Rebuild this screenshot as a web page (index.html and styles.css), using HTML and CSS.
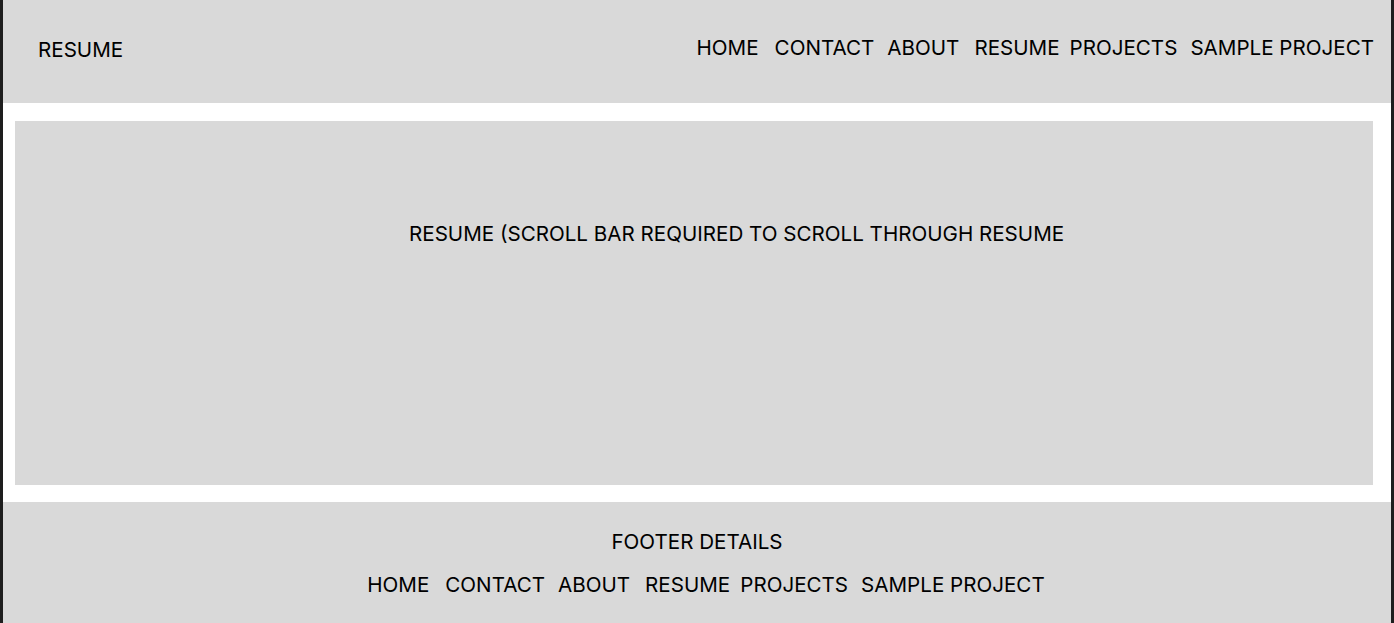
FILE: index.html
```html
<!DOCTYPE html>
<html lang="en">
<head>
    <meta charset="UTF-8">
    <meta name="viewport" content="width=device-width, initial-scale=1.0">
    <title>Resume</title>
    <link rel="stylesheet" href="styles.css">
</head>
<body>
    <div class="page">
        <header class="site-header">
            <div class="logo">RESUME</div>
            <nav class="nav">
                <a href="#">HOME</a>
                <a href="#">CONTACT</a>
                <a href="#">ABOUT</a>
                <a href="#">RESUME</a>
                <a href="#">PROJECTS</a>
                <a href="#">SAMPLE PROJECT</a>
            </nav>
        </header>

        <main class="content">
            <div class="resume-box">
                <p>RESUME (SCROLL BAR REQUIRED TO SCROLL THROUGH RESUME</p>
            </div>
        </main>

        <footer class="site-footer">
            <div class="footer-title">FOOTER DETAILS</div>
            <nav class="nav footer-nav">
                <a href="#">HOME</a>
                <a href="#">CONTACT</a>
                <a href="#">ABOUT</a>
                <a href="#">RESUME</a>
                <a href="#">PROJECTS</a>
                <a href="#">SAMPLE PROJECT</a>
            </nav>
        </footer>
    </div>
</body>
</html>
```

FILE: styles.css
```css
* {
    margin: 0;
    padding: 0;
    box-sizing: border-box;
    font-family: 'Inter', 'Noto Sans', sans-serif;
}
body {
    background: #fff;
    color: #000;
    height: 100vh;
    overflow: hidden;
}
.page {
    min-height: 100vh;
    border-left: 3px solid #1e1e1e;
    border-right: 3px solid #1e1e1e;
    display: flex;
    flex-direction: column;
    font-size: 20.6px;
    line-height: 24px;
}
.site-header {
    height: 103px;
    background: #d9d9d9;
    display: flex;
    justify-content: space-between;
    align-items: flex-start;
    padding: 36px 17px 0 35px;
}
.logo {
    margin-top: 2px;
}
.nav {
    display: flex;
}
.nav a {
    color: #000;
    text-decoration: none;
}
.nav a:nth-child(1) { margin-right: 16px; }
.nav a:nth-child(2) { margin-right: 13px; }
.nav a:nth-child(3) { margin-right: 15px; }
.nav a:nth-child(4) { margin-right: 10px; }
.nav a:nth-child(5) { margin-right: 13px; }
.content {
    background: #fff;
    padding: 18px 18px 17px 12px;
}
.resume-box {
    height: 364px;
    background: #d9d9d9;
    padding: 101px 0 0 394px;
}
.site-footer {
    flex: 1;
    background: #d9d9d9;
    display: flex;
    flex-direction: column;
    align-items: center;
    padding-top: 28px;
}
.footer-nav {
    margin-top: 19px;
    margin-left: 18px;
}
```
